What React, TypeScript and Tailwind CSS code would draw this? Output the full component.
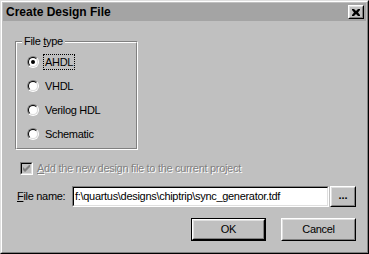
import React from 'react';

const FONT = { fontFamily: '"Liberation Sans", Arial, sans-serif' };

const RADIOS = ['AHDL', 'VHDL', 'Verilog HDL', 'Schematic'];

const Radio: React.FC<{ checked?: boolean }> = ({ checked }) => (
  <div className="w-[12px] h-[12px] rounded-full border border-t-[#808080] border-l-[#808080] border-r-white border-b-white">
    <div className="w-full h-full rounded-full border border-t-black border-l-black border-r-[#dfdfdf] border-b-[#dfdfdf] bg-white flex items-center justify-center">
      {checked && <div className="w-[4px] h-[4px] rounded-full bg-black" />}
    </div>
  </div>
);

const Raised: React.FC<{ className?: string; children?: React.ReactNode }> = ({ className = '', children }) => (
  <div className={`border border-t-white border-l-white border-r-black border-b-black ${className}`}>
    <div className="w-full h-full border border-t-[#dfdfdf] border-l-[#dfdfdf] border-r-[#808080] border-b-[#808080] bg-[#c0c0c0] flex items-center justify-center">
      {children}
    </div>
  </div>
);

export default function App() {
  return (
    <div className="w-[369px] h-[254px] text-[11px] text-black" style={FONT}>
      {/* Window frame */}
      <div className="w-full h-full border border-t-[#dfdfdf] border-l-[#dfdfdf] border-r-black border-b-black">
        <div className="w-full h-full border border-t-white border-l-white border-r-[#808080] border-b-[#808080] bg-[#c0c0c0] p-px flex flex-col">
          {/* Title bar */}
          <div className="h-[18px] bg-[#a4a4a4] flex items-center justify-between pl-[3px] pr-[2px]">
            <span className="font-bold text-[12px] leading-none">Create Design File</span>
            <Raised className="w-[16px] h-[14px]">
              <svg width="8" height="7" viewBox="0 0 8 7">
                <path d="M0 0h2l2 2 2-2h2v1L6 3.5 8 6v1H6L4 5 2 7H0V6l2-2.5L0 1z" fill="black" />
              </svg>
            </Raised>
          </div>

          {/* Body */}
          <div className="flex flex-col pl-[12px] pt-[20px] tracking-[-0.3px]">
            {/* Group box */}
            <div className="relative w-[123px] h-[109px] border border-t-[#808080] border-l-[#808080] border-r-white border-b-white">
              <div className="w-full h-full border border-t-white border-l-white border-r-[#808080] border-b-[#808080] pl-[10px] pt-[7px] flex flex-col">
                {RADIOS.map((label, i) => (
                  <div key={label} className="h-[24px] flex items-center gap-[5px]">
                    <Radio checked={i === 0} />
                    <span className={`px-px leading-[14px] ${i === 0 ? 'outline outline-1 outline-dotted outline-black' : ''}`}>
                      {label}
                    </span>
                  </div>
                ))}
              </div>
              <span className="absolute -top-[8px] left-[6px] px-[2px] bg-[#c0c0c0] leading-[14px]">
                File <span className="underline">t</span>ype
              </span>
            </div>

            {/* Disabled checkbox */}
            <div className="mt-[11px] h-[14px] flex items-center gap-[4px] pl-[5px]">
              <div className="w-[13px] h-[13px] border border-t-[#808080] border-l-[#808080] border-r-white border-b-white">
                <div className="w-full h-full border border-t-black border-l-black border-r-[#dfdfdf] border-b-[#dfdfdf] bg-[#c0c0c0] flex items-center justify-center">
                  <svg width="7" height="7" viewBox="0 0 7 7">
                    <path d="M0 2v3l2 2 5-5V-1L2 4z" fill="#808080" />
                  </svg>
                </div>
              </div>
              <span className="text-[#808080] [text-shadow:1px_1px_0_#fff]">
                <span className="underline">A</span>dd the new design file to the current project
              </span>
            </div>

            {/* File name row */}
            <div className="mt-[11px] flex items-center">
              <span className="w-[57px] pl-[2px]">
                <span className="underline">F</span>ile name:
              </span>
              <div className="w-[257px] h-[21px] border border-t-[#808080] border-l-[#808080] border-r-white border-b-white">
                <div className="w-full h-full border border-t-black border-l-black border-r-[#dfdfdf] border-b-[#dfdfdf] bg-white flex items-center pl-[1px]">
                  f:\quartus\designs\chiptrip\sync_generator.tdf
                </div>
              </div>
              <Raised className="ml-px w-[26px] h-[21px]">
                <span className="font-bold leading-none pb-[3px] tracking-normal">...</span>
              </Raised>
            </div>

            {/* Buttons */}
            <div className="mt-[11px] flex pl-[176px]">
              <div className="w-[75px] h-[23px] border border-black">
                <Raised className="w-full h-full">OK</Raised>
              </div>
              <Raised className="ml-[15px] w-[75px] h-[23px]">Cancel</Raised>
            </div>
          </div>
        </div>
      </div>
    </div>
  );
}
